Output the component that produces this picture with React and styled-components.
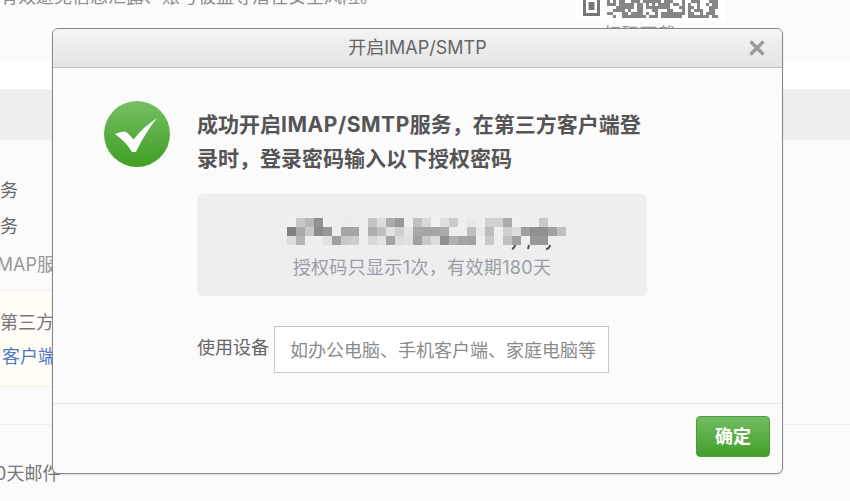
import React from "react";
import styled, { createGlobalStyle } from "styled-components";

const FONT = `Inter, "Noto Sans CJK SC", "Noto Sans", sans-serif`;

const Global = createGlobalStyle`
  html, body { margin: 0; padding: 0; background: #fbfbfb; }
  body { font-family: ${FONT}; overflow: hidden; }
  * { box-sizing: border-box; }
`;

const Page = styled.div`
  position: relative;
  width: 850px;
  height: 501px;
  overflow: hidden;
  background: #fbfbfb;
`;

const TopRow = styled.div`
  height: 62px;
  display: flex;
  justify-content: space-between;
  align-items: flex-start;
  padding-right: 124px;
`;

const Notice = styled.p`
  margin: -16px 0 0 0;
  font-size: 18px;
  line-height: 26px;
  color: #8c8c8c;
`;

const QrColumn = styled.div`
  width: 151px;
  display: flex;
  flex-direction: column;
  align-items: center;
`;

const QrPlate = styled.div`
  width: 151px;
  height: 22px;
  background: #fff;
  padding-left: 7px;
`;

const QrCaption = styled.div`
  font-size: 18px;
  line-height: 26px;
  color: #999;
  margin-right: 22px;
`;

const WhiteBand = styled.div`
  height: 27px;
  background: #fff;
`;

const GreyBand = styled.div`
  height: 51px;
  background: #efefef;
`;

const ServiceList = styled.div`
  padding-top: 33px;
  height: 150px;
  display: flex;
  flex-direction: column;
`;

const ServiceRow = styled.div`
  height: ${(p) => p.$h}px;
  margin-left: ${(p) => p.$shift}px;
  font-size: 18px;
  line-height: 36px;
  white-space: nowrap;
  color: ${(p) => (p.$muted ? "#999" : "#666")};
`;

const Tip = styled.div`
  width: 600px;
  height: 97px;
  background: #fffdf6;
  border-top: 1px solid #f0efe2;
  border-bottom: 1px solid #f0efe2;
  padding-top: 15px;
`;

const TipLine = styled.div`
  margin-left: ${(p) => p.$shift}px;
  font-size: 18px;
  line-height: 34px;
  white-space: nowrap;
  color: ${(p) => (p.$link ? "#4d77c7" : "#777")};
`;

const Divider = styled.div`
  margin-top: 37px;
  height: 1px;
  background: #efefef;
`;

const Retention = styled.div`
  margin: 36px 0 0 -16px;
  font-size: 18px;
  line-height: 26px;
  color: #777;
  white-space: nowrap;
`;

const Watermark = styled.div`
  position: absolute;
  inset: 0;
  pointer-events: none;
  z-index: 5;
  display: flex;
  flex-direction: column;
  gap: 134px;
  padding-top: 76px;
`;

const WatermarkLine = styled.div`
  font-family: Roboto, sans-serif;
  font-size: 36px;
  line-height: 36px;
  white-space: nowrap;
  color: rgba(0, 0, 0, 0.014);
  margin-left: ${(p) => p.$shift}px;
`;

const Dialog = styled.div`
  position: absolute;
  left: 52px;
  top: 28px;
  width: 731px;
  height: 446px;
  border: 1px solid #878787;
  border-radius: 6px;
  background: #fbfbfb;
  display: flex;
  flex-direction: column;
  box-shadow: 0 1px 2px rgba(0, 0, 0, 0.12);
  overflow: hidden;
`;

const DialogHeader = styled.div`
  height: 39px;
  flex: none;
  display: flex;
  align-items: center;
  justify-content: center;
  position: relative;
  background: linear-gradient(#f5f5f5, #e3e3e3);
  border-bottom: 1px solid #c4c4c4;
`;

const DialogTitle = styled.div`
  font-size: 18px;
  color: #666;
  line-height: 38px;
`;

const CloseIcon = styled.svg`
  position: absolute;
  right: 17px;
  top: 11px;
  width: 16px;
  height: 16px;
`;

const DialogBody = styled.div`
  flex: 1;
  display: flex;
  gap: 27px;
  padding: 33px 0 0 51px;
`;

const SuccessIcon = styled.svg`
  width: 66px;
  height: 66px;
  flex: none;
`;

const Content = styled.div`
  width: 450px;
  padding-top: 7px;
  display: flex;
  flex-direction: column;
`;

const Heading = styled.div`
  font-size: 21px;
  font-weight: 700;
  line-height: 34px;
  color: #555;
`;

const HeadingLatin = styled.span`
  letter-spacing: 0.55px;
`;

const CodeBox = styled.div`
  margin-top: 18px;
  height: 102px;
  border-radius: 6px;
  background: #eeeeee;
  padding-top: 24px;
  display: flex;
  flex-direction: column;
  align-items: center;
`;

const Mosaic = styled.svg`
  width: 279px;
  height: 32px;
  margin-left: 9px;
  margin-bottom: 5px;
  flex: none;
`;

const CodeNote = styled.div`
  font-size: 18px;
  line-height: 26px;
  letter-spacing: 0.35px;
  color: #9a9da8;
`;

const DeviceRow = styled.div`
  margin-top: 30px;
  display: flex;
  align-items: center;
  gap: 5px;
`;

const DeviceLabel = styled.label`
  font-size: 18px;
  color: #666;
  margin-top: -7px;
  white-space: nowrap;
`;

const DeviceInput = styled.input`
  width: 335px;
  height: 47px;
  border: 1px solid #c8c8c8;
  background: #fff;
  padding: 1px 0 0 15px;
  font-family: ${FONT};
  font-size: 18px;
  outline: none;
  &::placeholder { color: #8a8a8a; opacity: 1; }
`;

const DialogFooter = styled.div`
  height: 70px;
  flex: none;
  border-top: 1px solid #e4e4e4;
  display: flex;
  justify-content: flex-end;
  align-items: center;
  padding: 0 12px 4px 0;
`;

const ConfirmButton = styled.button`
  width: 74px;
  height: 41px;
  border: 1px solid #4b9f3a;
  border-radius: 4px;
  background: linear-gradient(#72bc61, #42a02b);
  color: #fff;
  font-family: ${FONT};
  font-size: 18px;
  font-weight: 700;
  padding: 0 0 3px;
`;

const MOSAIC = [
  ["f0","c8","b8","90","f0","ee","ec","ee","ee","c4","dd","aa","98","ee","c0","d8","f0","e0","cc","ee","e8","ee","d0","d0","ab","f0","ee","ee","c8","ee","ee"],
  ["80","aa","c8","8c","98","ee","a5","a5","ee","ae","c0","e2","d0","e4","a8","a5","a5","ac","ee","ee","c0","e8","bc","ee","d0","dc","a0","90","90","a0","c0"],
  ["dd","b4","ee","ee","e0","a0","c8","cc","ee","d8","e2","a4","dc","e0","a0","c8","dc","90","b0","a4","a0","ee","c8","ee","c0","a0","ee","98","98","ee","ee"],
];

const qrCells = () => {
  const cells = [];
  for (let r = 0; r < 6; r++) {
    for (let c = 0; c < 38; c++) {
      const h = Math.sin(c * 12.9898 + r * 78.233) * 43758.5453;
      if (h - Math.floor(h) > 0.42) cells.push({ x: 22 + c * 3, y: r * 3 });
    }
  }
  return cells;
};

export default function App() {
  return (
    <Page>
      <Global />
      <TopRow>
        <Notice>有效避免信息泄露、账号被盗等潜在安全风险。</Notice>
        <QrColumn>
          <QrPlate>
            <svg width="137" height="18" viewBox="0 0 137 18">
              <path d="M1 -4h17v20H1z M4 -1v14h11V-1z" fill="#777" fillRule="evenodd" />
              <rect x="6.5" y="2" width="6" height="8" fill="#777" />
              {qrCells().map((q) => (
                <rect key={`${q.x}-${q.y}`} x={q.x} y={q.y} width="3" height="3" fill="#858585" />
              ))}
            </svg>
          </QrPlate>
          <QrCaption>扫码下载</QrCaption>
        </QrColumn>
      </TopRow>
      <WhiteBand />
      <GreyBand />
      <ServiceList>
        <ServiceRow $h={36} $shift={-54}>开启服务</ServiceRow>
        <ServiceRow $h={38} $shift={-54}>开启服务</ServiceRow>
        <ServiceRow $h={38} $shift={-8} $muted>IMAP服务</ServiceRow>
      </ServiceList>
      <Tip>
        <TipLine $shift={0}>第三方客户端</TipLine>
        <TipLine $shift={2} $link>客户端设置</TipLine>
      </Tip>
      <Divider />
      <Retention>30天邮件</Retention>

      <Dialog>
        <DialogHeader>
          <DialogTitle>开启IMAP/SMTP</DialogTitle>
          <CloseIcon viewBox="0 0 16 16">
            <path d="M1.500 1.500l13 13M14.500 1.500l-13 13" stroke="#9b9b9b" strokeWidth="3.4" fill="none" />
          </CloseIcon>
        </DialogHeader>
        <DialogBody>
          <SuccessIcon viewBox="0 0 66 66">
            <defs>
              <linearGradient id="ok" x1="0" y1="0" x2="0" y2="1">
                <stop offset="0" stopColor="#75bf63" />
                <stop offset="1" stopColor="#3f9f23" />
              </linearGradient>
            </defs>
            <circle cx="33" cy="33" r="33" fill="url(#ok)" />
            <path d="M11 33 C14 32 17 31 20 30.500 C23 31 26 34 29.500 38.500 C36 30 44 23 53 17 C46 26 38 38 32 51 L28 51 C24 44 18 38 11 33 Z" fill="#fff" />
          </SuccessIcon>
          <Content>
            <Heading>成功开启<HeadingLatin>IMAP/SMTP</HeadingLatin>服务，在第三方客户端登录时，登录密码输入以下授权密码</Heading>
            <CodeBox>
              <Mosaic viewBox="0 0 279 32">
                {MOSAIC.flatMap((row, r) =>
                  row.map((v, c) => (
                    <rect key={`${r}-${c}`} x={c * 9} y={r * 9} width="9" height="9" fill={`#${v}${v}${v}`} />
                  ))
                )}
                <path d="M228 27c0 2-1 3-3 4M242 27l-1 4M263 27c0 2-2 4-4 4" stroke="#555" strokeWidth="2" fill="none" />
              </Mosaic>
              <CodeNote>授权码只显示1次，有效期180天</CodeNote>
            </CodeBox>
            <DeviceRow>
              <DeviceLabel>使用设备</DeviceLabel>
              <DeviceInput placeholder="如办公电脑、手机客户端、家庭电脑等" />
            </DeviceRow>
          </Content>
        </DialogBody>
        <DialogFooter>
          <ConfirmButton>确定</ConfirmButton>
        </DialogFooter>
      </Dialog>

      <Watermark>
        <WatermarkLine $shift={-20}>wb_yangwenwb_yangwenwb_yangwenwb_yangwenwb_yangwenwb</WatermarkLine>
        <WatermarkLine $shift={-60}>yangwenwb_yangwenwb_yangwenwb_yangwenwb_yangwenwb_yang</WatermarkLine>
        <WatermarkLine $shift={-20}>wb_yangwenwb_yangwenwb_yangwenwb_yangwenwb_yangwenwb</WatermarkLine>
      </Watermark>
    </Page>
  );
}
